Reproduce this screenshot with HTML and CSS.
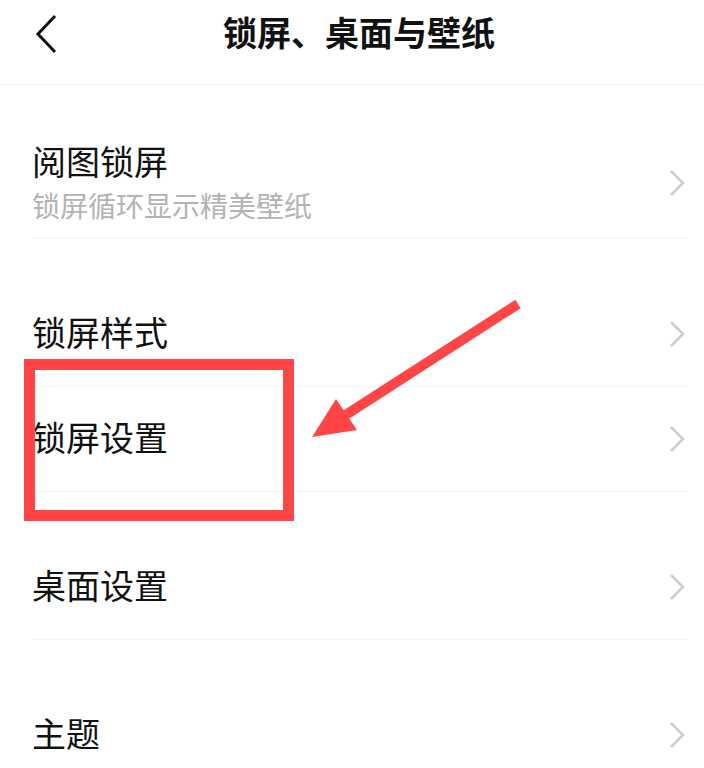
FILE: index.html
```html
<!DOCTYPE html>
<html lang="zh-CN">
<head>
<meta charset="utf-8">
<title>锁屏、桌面与壁纸</title>
<link rel="stylesheet" href="styles.css">
</head>
<body>
<div class="page">
  <header class="header">
    <div class="back">
      <svg width="24" height="40" viewBox="0 0 24 40"><polyline points="20,2 3,20 20,38" fill="none" stroke="#111" stroke-width="3"/></svg>
    </div>
    <h1 class="title">锁屏、桌面与壁纸</h1>
    <div></div>
  </header>

  <div class="gap"></div>
  <div class="row row-tall">
    <div class="texts">
      <div class="label">阅图锁屏</div>
      <div class="sub">锁屏循环显示精美壁纸</div>
    </div>
    <svg class="chev" width="16" height="26" viewBox="0 0 16 26"><polyline points="2,1 14,13 2,25" fill="none" stroke="#cdcdcd" stroke-width="2.5"/></svg>
  </div>

  <div class="gap"></div>
  <div class="row">
    <div class="label">锁屏样式</div>
    <svg class="chev" width="16" height="26" viewBox="0 0 16 26"><polyline points="2,1 14,13 2,25" fill="none" stroke="#cdcdcd" stroke-width="2.5"/></svg>
  </div>
  <div class="row">
    <div class="label">锁屏设置</div>
    <svg class="chev" width="16" height="26" viewBox="0 0 16 26"><polyline points="2,1 14,13 2,25" fill="none" stroke="#cdcdcd" stroke-width="2.5"/></svg>
  </div>

  <div class="gap"></div>
  <div class="row">
    <div class="label">桌面设置</div>
    <svg class="chev" width="16" height="26" viewBox="0 0 16 26"><polyline points="2,1 14,13 2,25" fill="none" stroke="#cdcdcd" stroke-width="2.5"/></svg>
  </div>

  <div class="gap"></div>
  <div class="row">
    <div class="label">主题</div>
    <svg class="chev" width="16" height="26" viewBox="0 0 16 26"><polyline points="2,1 14,13 2,25" fill="none" stroke="#cdcdcd" stroke-width="2.5"/></svg>
  </div>

  <svg class="annot" width="704" height="768" viewBox="0 0 704 768">
    <rect x="29.5" y="364.5" width="259" height="151" fill="none" stroke="#ff4545" stroke-width="11"/>
    <line x1="518" y1="304" x2="344" y2="416" stroke="#ff4545" stroke-width="10"/>
    <polygon points="312,437 336,399 357,430" fill="#ff4545"/>
  </svg>
</div>
</body>
</html>
```

FILE: styles.css
```css
html, body {
  margin: 0;
  padding: 0;
  background: #ffffff;
}

.page {
  position: relative;
  width: 704px;
  height: 768px;
  overflow: hidden;
  font-family: "Noto Sans CJK SC", "Noto Sans", sans-serif;
  color: #111111;
}

.header {
  display: grid;
  grid-template-columns: 1fr auto 1fr;
  align-items: center;
  height: 68px;
  padding-bottom: 16px;
  border-bottom: 1px solid #f3f3f3;
}

.back {
  display: flex;
  padding-left: 35px;
}

.back svg {
  display: block;
}

.title {
  margin: 0;
  padding-left: 14px;
  font-size: 34px;
  line-height: 34px;
  font-weight: 700;
  color: #111111;
  position: relative;
  top: -2px;
}

.gap {
  height: 43px;
}

.row {
  display: flex;
  align-items: center;
  justify-content: space-between;
  height: 104px;
  margin: 0 16px 0 32px;
  padding-right: 3px;
  border-bottom: 1px solid #f3f3f3;
}

.row-tall {
  height: 110px;
}

.texts {
  display: flex;
  flex-direction: column;
  gap: 13px;
}

.label {
  font-size: 34px;
  line-height: 34px;
  color: #111111;
  position: relative;
  top: -2px;
}

.sub {
  font-size: 28px;
  line-height: 28px;
  color: #b3b3b3;
  position: relative;
  top: -2px;
}

.chev {
  display: block;
}

.annot {
  position: absolute;
  left: 0;
  top: 0;
  pointer-events: none;
}
```
